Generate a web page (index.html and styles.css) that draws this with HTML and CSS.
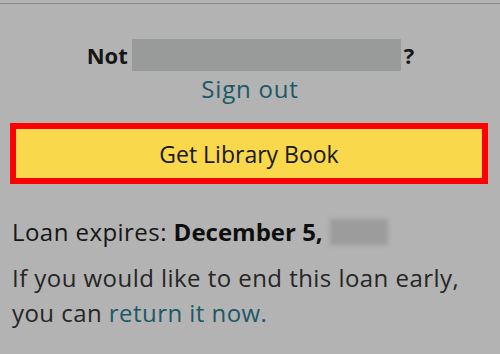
FILE: index.html
```html
<!DOCTYPE html>
<html>
<head>
<meta charset="utf-8">
<link rel="stylesheet" href="styles.css">
</head>
<body>
<div class="page">
  <div class="topline"></div>
  <div class="account">
    <div class="not-line"><span class="not">Not</span><span class="redact"></span><span class="q">?</span></div>
    <a class="signout" href="#">Sign out</a>
  </div>
  <div class="btn-wrap">
    <button class="get-btn">Get Library Book</button>
  </div>
  <div class="loan">
    <p class="expires"><span>Loan expires:&nbsp;</span><b>December 5,</b><span class="blur-year"></span></p>
    <p class="early">If you would like to end this loan early,<br>you can <a class="link" href="#">return it now.</a></p>
  </div>
</div>
</body>
</html>
```
FILE: styles.css
```css
html, body {
  margin: 0;
  padding: 0;
  background: #b3b3b3;
}
.page {
  width: 500px;
  height: 354px;
  font-family: "Open Sans", "Noto Sans", sans-serif;
  color: #161616;
  overflow: hidden;
}
.topline {
  height: 2px;
  border-top: 1px solid #b3b3b3;
  border-bottom: 1px solid #8c8c8c;
}
.account {
  display: flex;
  flex-direction: column;
  align-items: center;
  padding-top: 35px;
}
.not-line {
  display: flex;
  align-items: center;
  height: 32px;
  font-size: 22px;
  font-weight: 700;
  margin-left: 1px;
}
.redact {
  display: inline-block;
  width: 269px;
  height: 32px;
  background: #999a9a;
  margin: 0 3px 0 4px;
}
.signout {
  font-size: 24px;
  letter-spacing: 0.8px;
  color: #1c5966;
  text-decoration: none;
  line-height: 30px;
  margin-top: 3px;
}
.btn-wrap {
  padding: 19px 12px 0 10px;
}
.get-btn {
  display: block;
  width: 100%;
  height: 61px;
  background: #f9d84b;
  border: 6px solid #ff0000;
  font-family: inherit;
  font-size: 23px;
  color: #171717;
  padding: 0;
}
.loan {
  padding: 31px 12px 0 12px;
  font-size: 24px;
  letter-spacing: 0.45px;
}
.loan p {
  margin: 0;
}
.expires {
  line-height: 34px;
  display: flex;
  align-items: center;
}
.expires b {
  font-weight: 700;
  color: #0e0e0e;
  letter-spacing: 0;
}
.blur-year {
  display: inline-block;
  width: 58px;
  height: 26px;
  margin-left: 7px;
  background: #9c9c9c;
  filter: blur(2px);
}
.early {
  margin-top: 11px !important;
  line-height: 35px;
  color: #262626;
}
.link {
  color: #1c5966;
  text-decoration: none;
}
```
